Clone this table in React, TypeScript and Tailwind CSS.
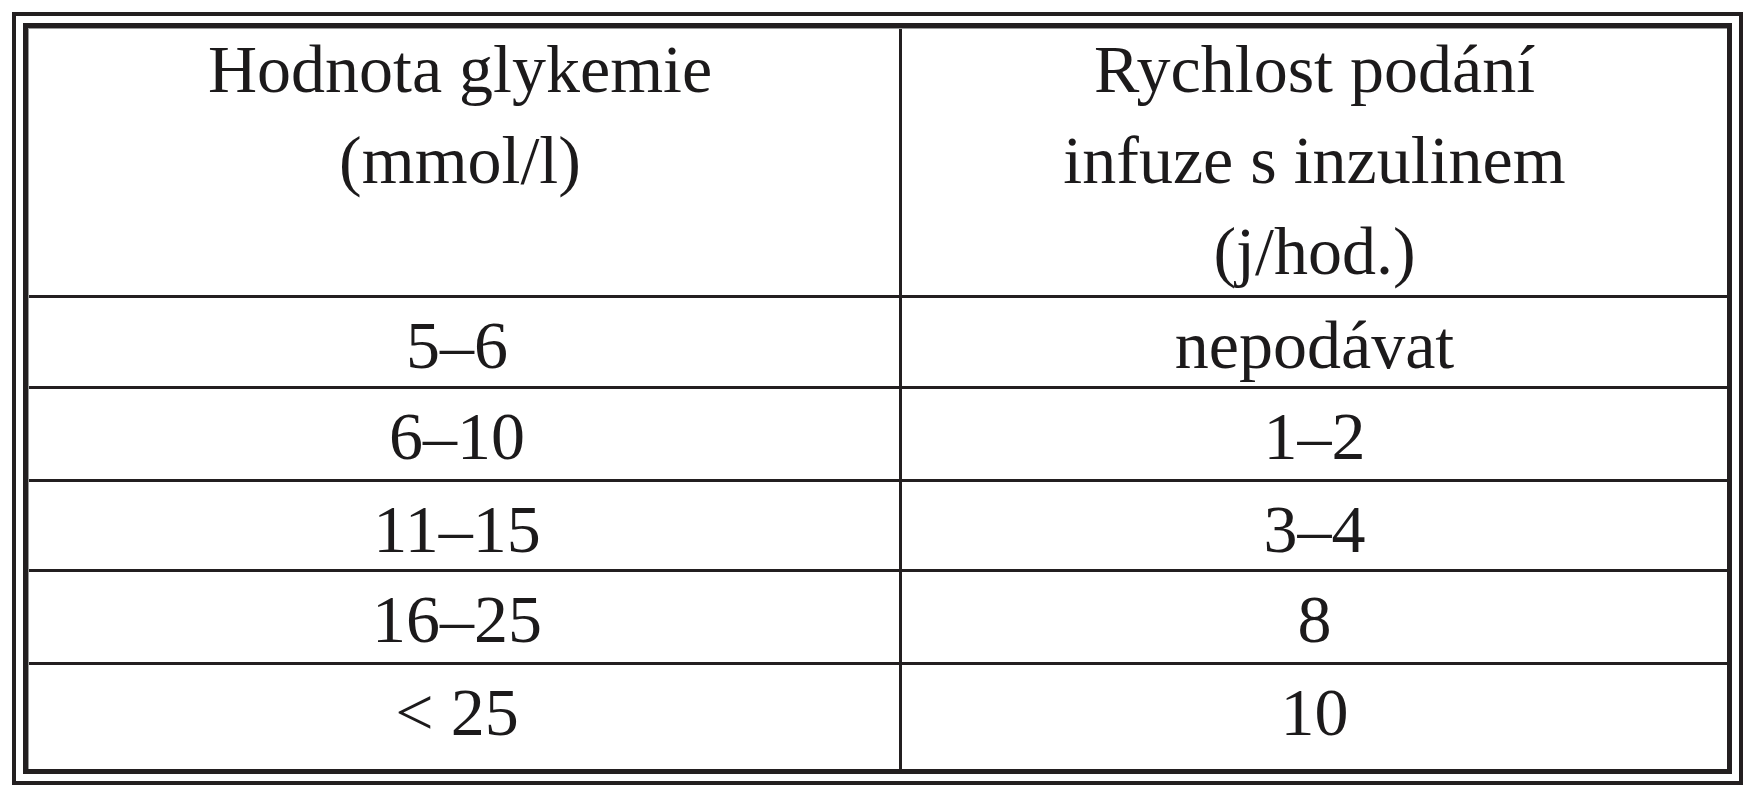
import React from "react";

const rows: { a: string; b: string; h: string }[] = [
  { a: "5–6", b: "nepodávat", h: "h-[91px]" },
  { a: "6–10", b: "1–2", h: "h-[93px]" },
  { a: "11–15", b: "3–4", h: "h-[90px]" },
  { a: "16–25", b: "8", h: "h-[93px]" },
  { a: "< 25", b: "10", h: "flex-1" },
];

export default function App() {
  return (
    <div
      className="w-[1755px] h-[800px] bg-white pt-[12px] pl-[12px] text-[#1c1a1b]"
      style={{ fontFamily: '"Liberation Serif", "Times New Roman", serif' }}
    >
      <div className="w-[1731px] h-[773px] border-[4px] border-[#231f20] p-[7px]">
        <div className="w-full h-full border-[5px] border-[#231f20]">
          <div className="w-full h-full flex flex-col border-l border-t border-[#9a9a9a]">
            {/* header */}
            <div className="flex h-[269px] shrink-0 border-b-[3px] border-[#231f20]">
              <div className="w-[873px] border-r-[3px] border-[#231f20] text-center text-[68px] leading-[91px] pr-[8px]">
                <div className="-mt-[5px]">Hodnota glykemie</div>
                <div>(mmol/l)</div>
              </div>
              <div className="flex-1 text-center text-[68px] leading-[91px]">
                <div className="-mt-[5px]">Rychlost podání</div>
                <div>infuze s inzulinem</div>
                <div>(j/hod.)</div>
              </div>
            </div>
            {rows.map((r, i) => (
              <div
                key={i}
                className={`flex shrink-0 ${r.h} ${i < rows.length - 1 ? "border-b-[3px] border-[#231f20]" : ""}`}
              >
                <div className="w-[873px] border-r-[3px] border-[#231f20] text-center text-[68px] leading-[78px] pt-[8px] pr-[14px]">
                  {r.a}
                </div>
                <div className="flex-1 text-center text-[68px] leading-[78px] pt-[8px]">
                  {r.b}
                </div>
              </div>
            ))}
          </div>
        </div>
      </div>
    </div>
  );
}
